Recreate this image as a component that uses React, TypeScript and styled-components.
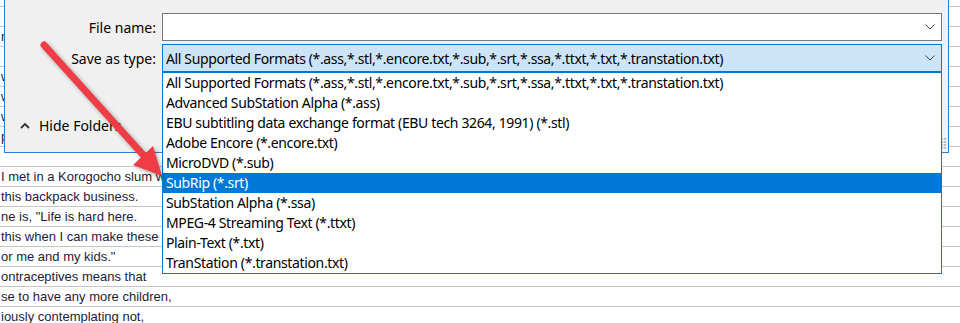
import React from "react";
import styled, { createGlobalStyle } from "styled-components";

const GlobalStyle = createGlobalStyle`
  html, body {
    margin: 0;
    padding: 0;
    background: #ffffff;
    overflow: hidden;
  }
  body {
    width: 960px;
    height: 323px;
  }
`;

const rows = [
  "", "", "m", "", "w", "w", "w", "p", "",
  "I met in a Korogocho slum w",
  "this backpack business.",
  "ne is, \"Life is hard here.",
  "this when I can make these",
  "or me and my kids.\"",
  "ontraceptives means that",
  "se to have any more children,",
  "iously contemplating not,",
  "",
];

const formats = [
  "All Supported Formats (*.ass,*.stl,*.encore.txt,*.sub,*.srt,*.ssa,*.ttxt,*.txt,*.transtation.txt)",
  "Advanced SubStation Alpha (*.ass)",
  "EBU subtitling data exchange format (EBU tech 3264, 1991) (*.stl)",
  "Adobe Encore (*.encore.txt)",
  "MicroDVD (*.sub)",
  "SubRip (*.srt)",
  "SubStation Alpha (*.ssa)",
  "MPEG-4 Streaming Text (*.ttxt)",
  "Plain-Text (*.txt)",
  "TranStation (*.transtation.txt)",
];

const Chevron = () => (
  <svg width="10" height="6" viewBox="0 0 10 6">
    <path d="M0.5 0.5 L5 5 L9.5 0.5" fill="none" stroke="#444" strokeWidth="1" />
  </svg>
);

const App = () => {
  return (
    <Page>
      <GlobalStyle />
      <Grid>
        {rows.map((text, i) => (
          <GridRow key={i}>{text}</GridRow>
        ))}
      </Grid>

      <Dialog>
        <Form>
          <Label>File name:</Label>
          <Field>
            <FieldText></FieldText>
            <Chevron />
          </Field>
          <Label>Save as type:</Label>
          <ComboWrap>
            <Field $active>
              <FieldText>{formats[0]}</FieldText>
              <Chevron />
            </Field>
            <List>
              {formats.map((f) => (
                <Item key={f} $selected={f === "SubRip (*.srt)"}>
                  {f}
                </Item>
              ))}
            </List>
          </ComboWrap>
        </Form>
        <Footer>
          <svg width="10" height="7" viewBox="0 0 10 7">
            <path d="M1 6 L5 2 L9 6" fill="none" stroke="#333" strokeWidth="1.8" />
          </svg>
          <span>Hide Folders</span>
        </Footer>
        <Grip width="6" height="12" viewBox="0 0 6 12">
          <rect x="0" y="0" width="2" height="2" fill="#bdbdbd" />
          <rect x="3" y="0" width="2" height="2" fill="#bdbdbd" />
          <rect x="0" y="3" width="2" height="2" fill="#bdbdbd" />
          <rect x="3" y="3" width="2" height="2" fill="#bdbdbd" />
          <rect x="0" y="6" width="2" height="2" fill="#bdbdbd" />
          <rect x="3" y="6" width="2" height="2" fill="#bdbdbd" />
          <rect x="0" y="9" width="2" height="2" fill="#bdbdbd" />
          <rect x="3" y="9" width="2" height="2" fill="#bdbdbd" />
        </Grip>
      </Dialog>

      <Arrow width="960" height="323" viewBox="0 0 960 323">
        <line
          x1="44"
          y1="45"
          x2="145"
          y2="157"
          stroke="#f03c44"
          strokeWidth="7"
          strokeLinecap="round"
        />
        <polygon points="162,176 133,165 153,146" fill="#f03c44" />
      </Arrow>
    </Page>
  );
};

export default App;

const Page = styled.div`
  position: relative;
  width: 960px;
  height: 323px;
  overflow: hidden;
  background: #ffffff;
`;

const Grid = styled.div`
  display: flex;
  flex-direction: column;
  margin-top: -13px;
`;

const GridRow = styled.div`
  box-sizing: border-box;
  height: 20px;
  border-bottom: 1px solid #c6c6c6;
  padding-left: 1px;
  font-family: "Liberation Sans", Arial, sans-serif;
  font-size: 13px;
  line-height: 19px;
  color: #1c1c38;
  white-space: nowrap;
`;

const Dialog = styled.div`
  position: absolute;
  left: 4px;
  top: 0;
  width: 945px;
  height: 153px;
  box-sizing: border-box;
  background: #f0f0f0;
  border: 1px solid #2a7fd4;
  border-top: none;
  display: flex;
  flex-direction: column;
  font-family: "Noto Sans", "Open Sans", sans-serif;
  font-size: 14px;
  color: #000;
`;

const Form = styled.div`
  display: grid;
  grid-template-columns: 157px 1fr;
  row-gap: 3px;
  padding: 13px 6px 0 0;
  align-items: center;
`;

const Label = styled.div`
  text-align: right;
  padding-right: 6px;
`;

const ComboWrap = styled.div`
  position: relative;
`;

const Field = styled.div<{ $active?: boolean }>`
  box-sizing: border-box;
  height: 28px;
  display: flex;
  align-items: center;
  padding: 0 6px 0 3px;
  background: ${(p) => (p.$active ? "#cce4f7" : "#ffffff")};
  border: 1px solid ${(p) => (p.$active ? "#0078d7" : "#7a7a7a")};
`;

const FieldText = styled.div`
  flex: 1;
  white-space: nowrap;
  overflow: hidden;
  letter-spacing: -0.36px;
`;

const List = styled.div`
  position: absolute;
  top: 100%;
  left: 0;
  right: 0;
  box-sizing: border-box;
  background: #ffffff;
  border: 1px solid #0078d7;
  z-index: 2;
  letter-spacing: -0.36px;
`;

const Item = styled.div<{ $selected?: boolean }>`
  height: 20px;
  line-height: 20px;
  padding-left: 3px;
  white-space: nowrap;
  background: ${(p) => (p.$selected ? "#0078d7" : "transparent")};
  color: ${(p) => (p.$selected ? "#ffffff" : "#000000")};
`;

const Footer = styled.div`
  margin-top: auto;
  margin-bottom: 16px;
  display: flex;
  align-items: center;
  gap: 9px;
  padding-left: 15px;
  height: 22px;
`;

const Grip = styled.svg`
  position: absolute;
  right: 1px;
  bottom: 2px;
`;

const Arrow = styled.svg`
  position: absolute;
  left: 0;
  top: 0;
  z-index: 5;
  pointer-events: none;
  filter: drop-shadow(2px 2px 2px rgba(0, 0, 0, 0.35));
`;
